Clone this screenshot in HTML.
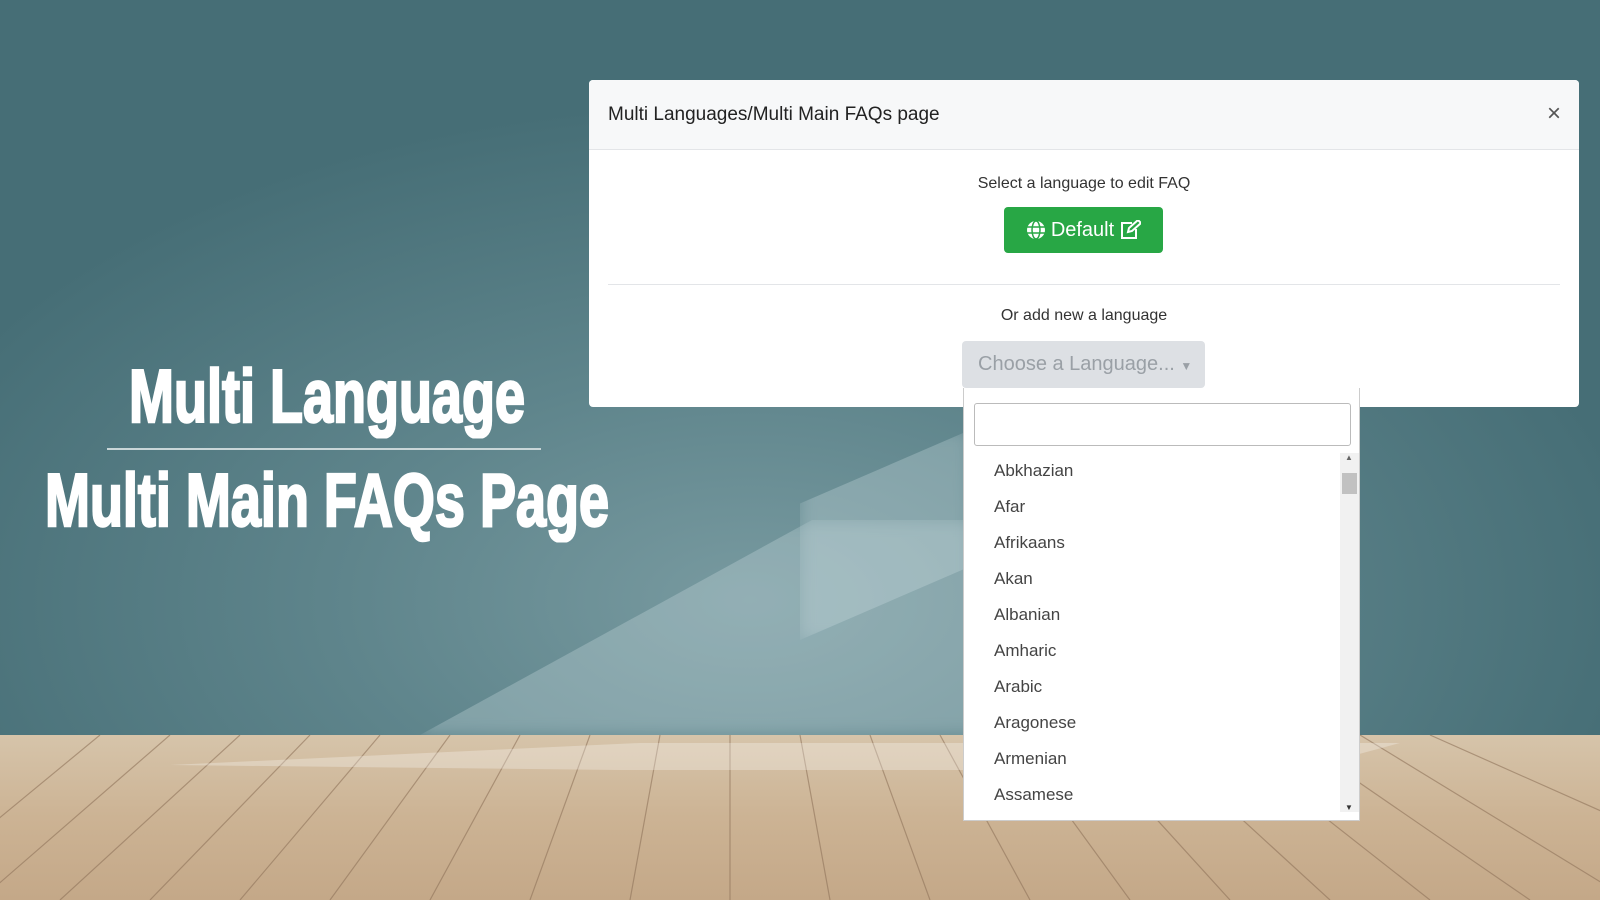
<!DOCTYPE html>
<html><head><style>
*{margin:0;padding:0;box-sizing:border-box}
body{width:1600px;height:900px;overflow:hidden;position:relative;font-family:"Liberation Sans",sans-serif;background:#4a7179}
.wall{position:absolute;left:0;top:0;width:1600px;height:735px;background:radial-gradient(ellipse 900px 500px at 750px 600px,#789aa0 0%,#5f858c 45%,#466e76 100%)}
.shaft{position:absolute;background:rgba(210,225,228,.3);filter:blur(8px)}
.floor{position:absolute;left:0;top:735px;width:1600px;height:165px;background:linear-gradient(180deg,#d6c4aa,#ccb394 50%,#c4a888);overflow:hidden}
.big{position:absolute;color:#fff;font-family:"Liberation Sans Narrow","Liberation Sans",sans-serif;font-weight:bold;white-space:nowrap;text-align:center;transform:scale(0.9,1.25);-webkit-text-stroke:2px #fff}
.modal{position:absolute;left:589px;top:80px;width:990px;height:327px;background:#fff;border-radius:4px}
.mh{height:70px;background:#f7f8f9;border-bottom:1px solid #e3e5e8;border-radius:4px 4px 0 0;position:relative}
.mh span{position:absolute;left:19px;top:24px;font-size:19px;color:#222}
.x{position:absolute;right:18px;top:20px;font-size:24px;color:#555}
.c{position:absolute;left:0;width:990px;text-align:center;font-size:16px;color:#333}
.btn{position:absolute;left:415px;top:127px;width:159px;height:46px;background:#28a745;border-radius:4px;color:#fff;font-size:20px;display:flex;align-items:center;justify-content:center;gap:5px}
.sel{position:absolute;left:962px;top:341px;width:243px;height:47px;background:#dde0e4;border-radius:4px;color:#9aa0a6;font-size:20px;line-height:47px;padding-left:16px}
.dd{position:absolute;left:963px;top:388px;width:397px;height:433px;background:#fff;border:1px solid #ccc;border-top:none}
.inp{position:absolute;left:10px;top:15px;width:377px;height:43px;border:1px solid #bbb;border-radius:3px}
.it{position:absolute;left:30px;font-size:17px;color:#444}
.sb{position:absolute;left:376px;top:65px;width:19px;height:359px;background:#f1f1f1}
</style></head><body>
<div class="wall"></div>
<div class="shaft" style="left:420px;top:520px;width:560px;height:215px;clip-path:polygon(0 100%,70% 0,100% 0,100% 100%)"></div>
<div class="shaft" style="left:800px;top:430px;width:170px;height:210px;clip-path:polygon(0 35%,100% 0,100% 65%,0 100%)"></div>
<div class="floor">
<svg width="1600" height="165" style="position:absolute;left:0;top:0">
<g stroke="#8f735a" stroke-width="1.2" opacity=".6">
<line x1="-100" y1="165" x2="100" y2="0"/><line x1="-20" y1="165" x2="170" y2="0"/><line x1="60" y1="165" x2="240" y2="0"/><line x1="150" y1="165" x2="310" y2="0"/><line x1="240" y1="165" x2="380" y2="0"/><line x1="330" y1="165" x2="450" y2="0"/><line x1="430" y1="165" x2="520" y2="0"/><line x1="530" y1="165" x2="590" y2="0"/><line x1="630" y1="165" x2="660" y2="0"/><line x1="730" y1="165" x2="730" y2="0"/><line x1="830" y1="165" x2="800" y2="0"/><line x1="930" y1="165" x2="870" y2="0"/><line x1="1030" y1="165" x2="940" y2="0"/><line x1="1130" y1="165" x2="1010" y2="0"/><line x1="1230" y1="165" x2="1080" y2="0"/><line x1="1330" y1="165" x2="1150" y2="0"/><line x1="1430" y1="165" x2="1220" y2="0"/><line x1="1530" y1="165" x2="1290" y2="0"/><line x1="1630" y1="165" x2="1360" y2="0"/><line x1="1700" y1="120" x2="1430" y2="0"/>
</g>
<polygon points="170,30 640,8 1400,8 1300,35 620,35" fill="rgba(255,255,255,.28)"/>
</svg>
</div>
<div class="big" style="left:40px;width:574px;top:362px;font-size:60px;line-height:70px">Multi Language</div>
<div style="position:absolute;left:107px;top:448px;width:434px;height:2px;background:#c9d6d8"></div>
<div class="big" style="left:0px;width:654px;top:466px;font-size:60px;line-height:70px">Multi Main FAQs Page</div>
<div class="modal">
<div class="mh"><span>Multi Languages/Multi Main FAQs page</span><div class="x">×</div></div>
<div class="c" style="top:95px">Select a language to edit FAQ</div>
<div class="btn"><svg width="20" height="20" viewBox="0 0 20 20"><circle cx="10" cy="10" r="9" fill="#fff"/><g stroke="#28a745" stroke-width="1.5" fill="none"><ellipse cx="10" cy="10" rx="4" ry="9"/><line x1="1" y1="7" x2="19" y2="7"/><line x1="1" y1="13" x2="19" y2="13"/></g></svg>Default<svg width="22" height="20" viewBox="0 0 22 20" fill="none" stroke="#fff" stroke-width="2"><path d="M13 3H3v15h14V9"/><path d="M9 12l1-4 9-8 3 3-9 8z"/></svg></div>
<div style="position:absolute;left:19px;top:204px;width:952px;height:1px;background:#e3e5e8"></div>
<div class="c" style="top:227px">Or add new a language</div>
</div>
<div class="sel">Choose a Language... <span style="font-size:12px">▼</span></div>
<div class="dd">
<div class="inp"></div>
<div class="it" style="top:73px">Abkhazian</div>
<div class="it" style="top:109px">Afar</div>
<div class="it" style="top:145px">Afrikaans</div>
<div class="it" style="top:181px">Akan</div>
<div class="it" style="top:217px">Albanian</div>
<div class="it" style="top:253px">Amharic</div>
<div class="it" style="top:289px">Arabic</div>
<div class="it" style="top:325px">Aragonese</div>
<div class="it" style="top:361px">Armenian</div>
<div class="it" style="top:397px">Assamese</div>
<div class="sb"><div style="position:absolute;top:0;left:5px;font-size:8px;color:#666">▲</div><div style="position:absolute;left:2px;top:20px;width:15px;height:21px;background:#c1c1c1"></div><div style="position:absolute;bottom:0;left:5px;font-size:8px;color:#333">▼</div></div>
</div>
</body></html>
